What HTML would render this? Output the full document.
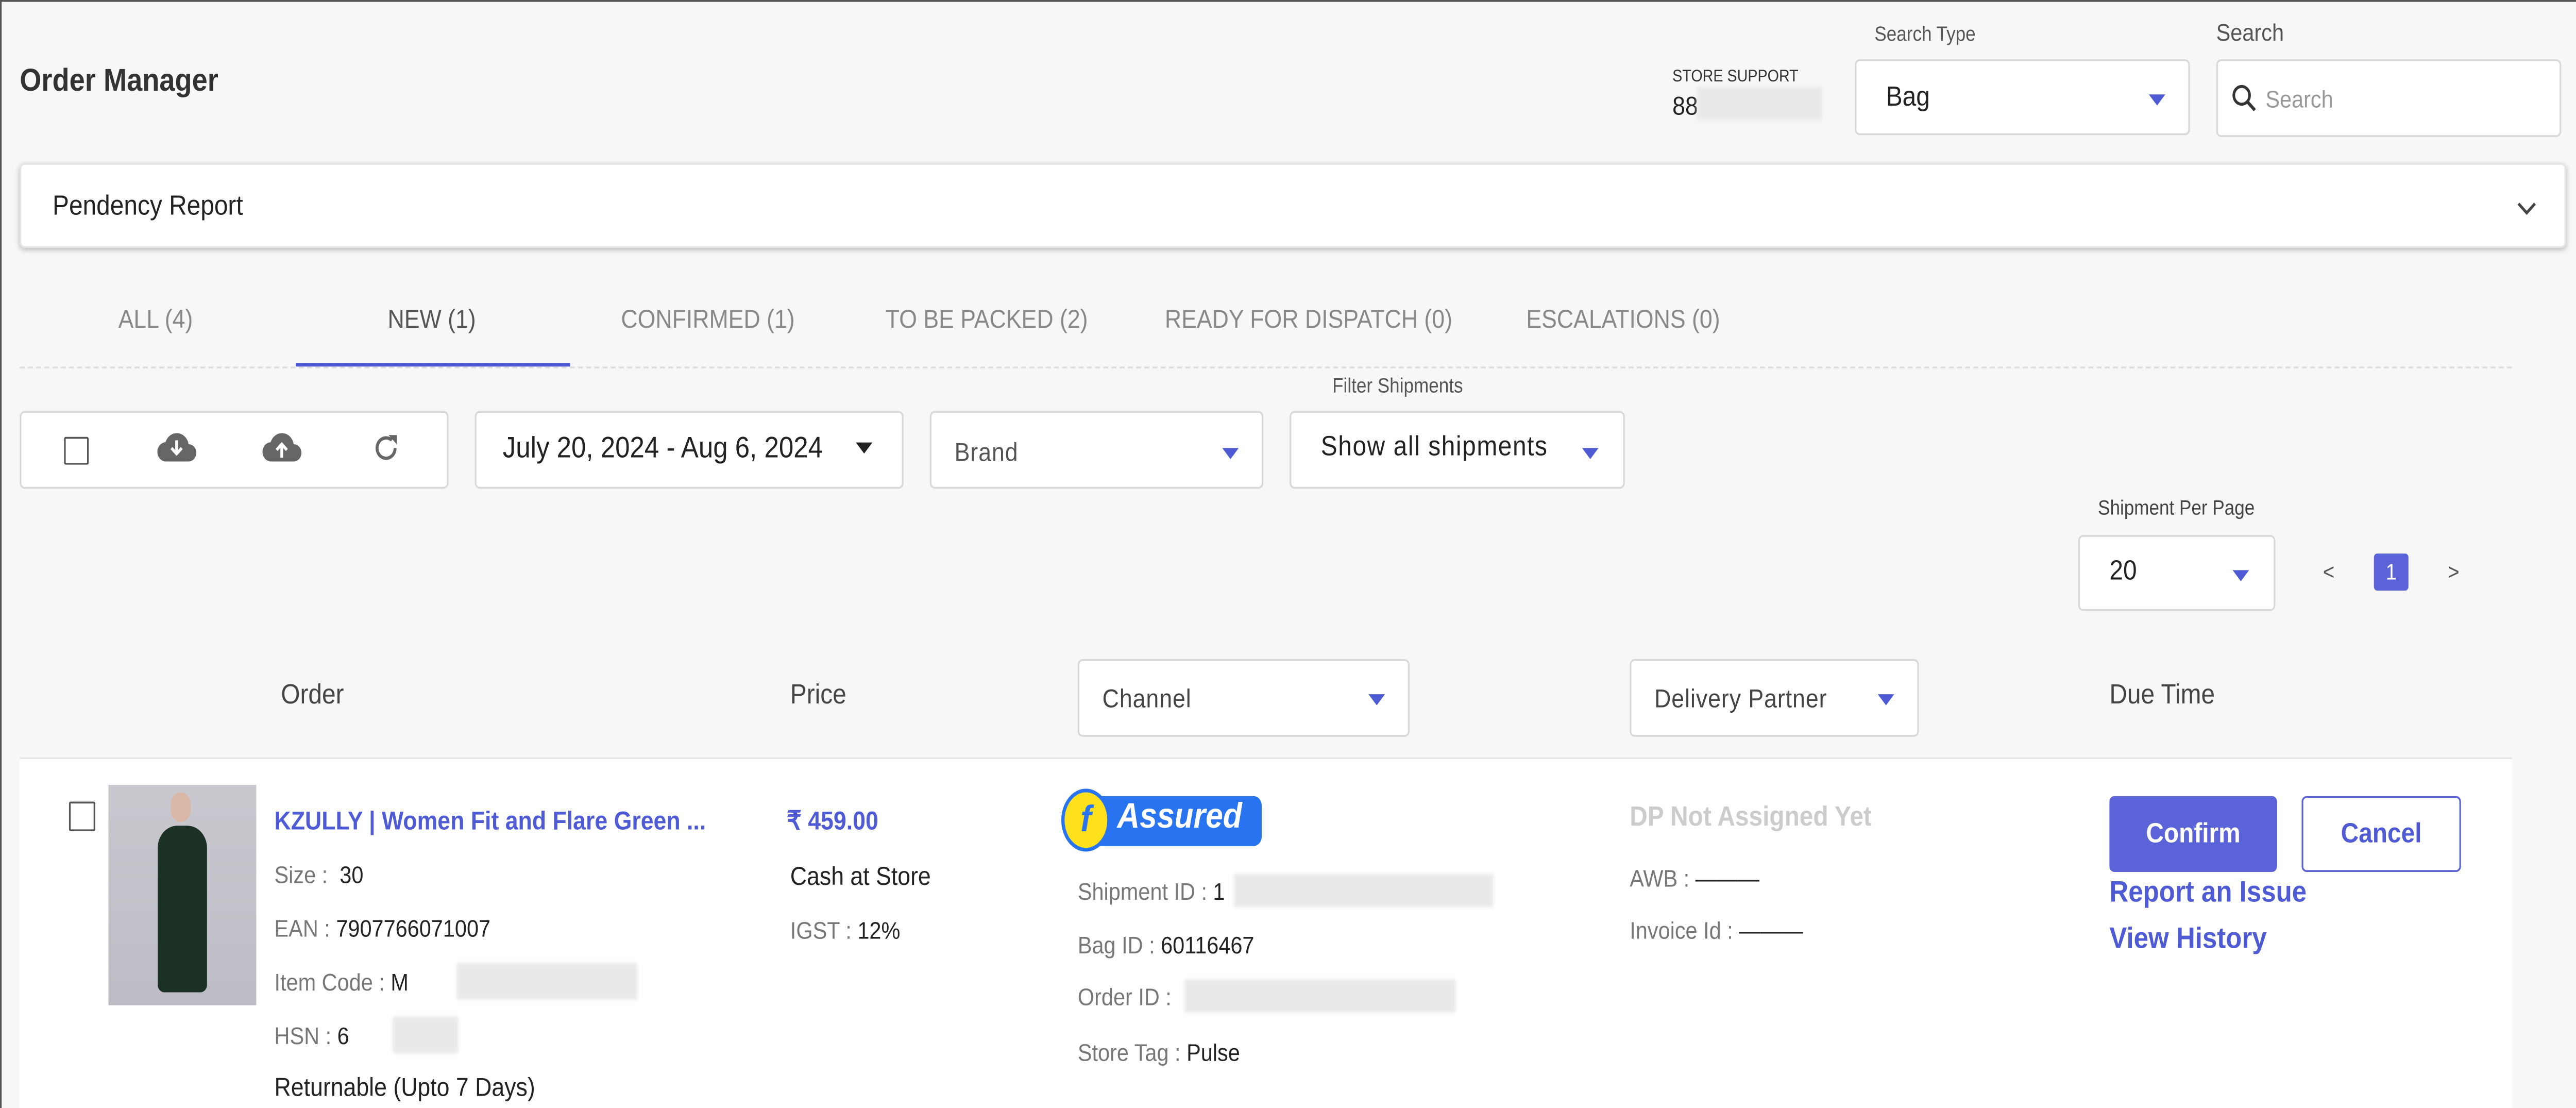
<!DOCTYPE html>
<html><head><meta charset="utf-8"><style>
html,body{margin:0;padding:0;width:100%;height:100%;overflow:hidden;background:#f7f7f7;}
#w{position:absolute;left:0;top:0;width:1568px;height:598.5px;overflow:hidden;transform:scale(3.5924);transform-origin:0 0;font-family:"Liberation Sans",sans-serif;color:#222;border-left:1px solid #555;border-top:1px solid #555;box-sizing:border-box;}
.a{position:absolute;white-space:nowrap;}
.box{position:absolute;background:#fff;border:1px solid #d8d8d8;border-radius:3px;box-sizing:border-box;}
.tri{position:absolute;width:0;height:0;border-left:5px solid transparent;border-right:5px solid transparent;border-top:6px solid #4f5bd5;}
.g{color:#777}.blur{position:absolute;background:#e9e9e9;filter:blur(1px);}
.tab{position:absolute;top:163px;font-size:14px;color:#888;}
</style></head><body><div id="w">
<div class="a" style="left:11px;top:33px;font-size:17px;font-weight:bold;color:#333">Order Manager</div>
<div class="a" style="left:1017px;top:35px;font-size:9px;color:#333">STORE SUPPORT</div>
<div class="a" style="left:1017px;top:48px;font-size:14px;color:#222">88</div>
<div class="blur" style="left:1032px;top:46px;width:76px;height:18px"></div>
<div class="a" style="left:1140px;top:12px;font-size:11px;color:#555">Search Type</div>
<div class="box" style="left:1128px;top:31px;width:204px;height:41px"></div>
<div class="a" style="left:1147px;top:43px;font-size:15px">Bag</div>
<div class="tri" style="left:1307px;top:50px"></div>
<div class="a" style="left:1348px;top:9px;font-size:13px;color:#555">Search</div>
<div class="box" style="left:1348px;top:31px;width:210px;height:42px"></div>
<svg class="a" style="left:1357px;top:44px" width="16" height="16" viewBox="0 0 16 16"><circle cx="6.5" cy="6.5" r="4.8" fill="none" stroke="#333" stroke-width="1.6"/><path d="M10 10l4.5 4.5" stroke="#333" stroke-width="1.8"/></svg>
<div class="a" style="left:1378px;top:45px;font-size:13px;color:#999">Search</div>
<div class="box" style="left:11px;top:87px;width:1550px;height:46px;box-shadow:0 1px 3px rgba(0,0,0,.25);border-color:#e5e5e5"></div>
<div class="a" style="left:31px;top:102px;font-size:15px">Pendency Report</div>
<svg class="a" style="left:1531px;top:108px" width="12" height="8"><path d="M1 1l5 5 5-5" fill="none" stroke="#444" stroke-width="1.6"/></svg>
<div class="tab" style="left:71px">ALL (4)</div>
<div class="tab" style="left:235px;color:#555">NEW (1)</div>
<div class="tab" style="left:377px">CONFIRMED (1)</div>
<div class="tab" style="left:538px">TO BE PACKED (2)</div>
<div class="tab" style="left:708px">READY FOR DISPATCH (0)</div>
<div class="tab" style="left:928px">ESCALATIONS (0)</div>
<div class="a" style="left:11px;top:197px;width:1517px;border-top:1px dashed #ddd"></div>
<div class="a" style="left:179px;top:195px;width:167px;height:2px;background:#4f5bd5"></div>
<div class="box" style="left:11px;top:221px;width:261px;height:42px"></div>
<div class="a" style="left:38px;top:235px;width:13px;height:13px;border:1.5px solid #555;border-radius:1px"></div>
<svg class="a" style="left:94px;top:232px" width="25" height="18" viewBox="0 0 24 16"><path d="M19 6A7 7 0 0 0 5.5 5 5 5 0 0 0 6 15h13a4.5 4.5 0 0 0 0-9z" fill="#666"/><path d="M12 4v7M9 8l3 3 3-3" stroke="#fff" stroke-width="1.6" fill="none"/></svg>
<svg class="a" style="left:158px;top:232px" width="25" height="18" viewBox="0 0 24 16"><path d="M19 6A7 7 0 0 0 5.5 5 5 5 0 0 0 6 15h13a4.5 4.5 0 0 0 0-9z" fill="#666"/><path d="M12 13V6M9 9l3-3 3 3" stroke="#fff" stroke-width="1.6" fill="none"/></svg>
<svg class="a" style="left:225px;top:232px" width="18" height="18" viewBox="0 0 18 18"><path d="M14.5 9A5.5 5.5 0 1 1 12.5 4.8" fill="none" stroke="#666" stroke-width="1.8"/><path d="M10.5 2h5v5z" fill="#666"/></svg>
<div class="box" style="left:288px;top:221px;width:261px;height:42px"></div>
<div class="a" style="left:305px;top:233px;font-size:16px">July 20, 2024 - Aug 6, 2024</div>
<div class="tri" style="left:520px;top:238px;border-top-color:#222"></div>
<div class="box" style="left:565px;top:221px;width:203px;height:42px"></div>
<div class="a" style="left:580px;top:235px;font-size:14px;color:#555;letter-spacing:.3px">Brand</div>
<div class="tri" style="left:743px;top:241px"></div>
<div class="a" style="left:810px;top:202px;font-size:11px;color:#555">Filter Shipments</div>
<div class="box" style="left:784px;top:221px;width:204px;height:42px"></div>
<div class="a" style="left:803px;top:232px;font-size:15px;letter-spacing:.5px">Show all shipments</div>
<div class="tri" style="left:962px;top:241px"></div>
<div class="a" style="left:1276px;top:268px;font-size:11px;color:#444">Shipment Per Page</div>
<div class="box" style="left:1264px;top:288px;width:120px;height:41px"></div>
<div class="a" style="left:1283px;top:299px;font-size:15px">20</div>
<div class="tri" style="left:1358px;top:307px"></div>
<div class="a" style="left:1413px;top:301px;font-size:12px;color:#555">&lt;</div>
<div class="a" style="left:1444px;top:298px;width:21px;height:20px;background:#5b63d9;border-radius:2px;color:#fff;font-size:12px;text-align:center;line-height:20px">1</div>
<div class="a" style="left:1489px;top:301px;font-size:12px;color:#555">&gt;</div>
<div class="a" style="left:170px;top:366px;font-size:15px;color:#444">Order</div>
<div class="a" style="left:480px;top:366px;font-size:15px;color:#444">Price</div>
<div class="box" style="left:655px;top:355px;width:202px;height:42px"></div>
<div class="a" style="left:670px;top:368px;font-size:14px;color:#444;letter-spacing:.3px">Channel</div>
<div class="tri" style="left:832px;top:374px"></div>
<div class="box" style="left:991px;top:355px;width:176px;height:42px"></div>
<div class="a" style="left:1006px;top:368px;font-size:14px;color:#444;letter-spacing:.3px">Delivery Partner</div>
<div class="tri" style="left:1142px;top:374px"></div>
<div class="a" style="left:1283px;top:366px;font-size:15px;color:#444">Due Time</div>
<div class="a" style="left:11px;top:408px;width:1517px;height:191px;background:#fff;border-top:1px solid #e6e6e6"></div>
<div class="a" style="left:41px;top:432px;width:14px;height:14px;border:1.5px solid #555;border-radius:1px"></div>
<div class="a" style="left:65px;top:423px;width:90px;height:119px;background:linear-gradient(#c9c8cf,#bdbcc4)"></div>
<div class="a" style="left:95px;top:445px;width:30px;height:90px;background:#1b3126;border-radius:12px 12px 4px 4px"></div>
<div class="a" style="left:103px;top:427px;width:12px;height:16px;background:#d9b7a6;border-radius:6px"></div>
<div class="a" style="left:166px;top:434px;font-size:14px;font-weight:bold;color:#4f5bd5">KZULLY | Women Fit and Flare Green ...</div>
<div class="a g" style="left:166px;top:464px;font-size:13px">Size : &nbsp;<span style="color:#222">30</span></div>
<div class="a g" style="left:166px;top:493px;font-size:13px">EAN : <span style="color:#222">7907766071007</span></div>
<div class="a g" style="left:166px;top:522px;font-size:13px">Item Code : <span style="color:#222">M</span></div>
<div class="blur" style="left:277px;top:519px;width:110px;height:20px"></div>
<div class="a g" style="left:166px;top:551px;font-size:13px">HSN : <span style="color:#222">6</span></div>
<div class="blur" style="left:238px;top:548px;width:40px;height:20px"></div>
<div class="a" style="left:166px;top:578px;font-size:14px">Returnable (Upto 7 Days)</div>
<div class="a" style="left:478px;top:434px;font-size:14px;font-weight:bold;color:#4f5bd5">₹ 459.00</div>
<div class="a" style="left:480px;top:464px;font-size:14px">Cash at Store</div>
<div class="a g" style="left:480px;top:494px;font-size:13px">IGST : <span style="color:#222">12%</span></div>
<div class="a" style="left:660px;top:429px;width:107px;height:27px;background:#2874f0;border-radius:5px"></div>
<div class="a" style="left:645px;top:425px;width:30px;height:34px;background:#ffe11b;border:2px solid #2874f0;border-radius:50%;box-sizing:border-box;color:#2874f0;font-weight:bold;font-style:italic;font-size:20px;text-align:center;line-height:30px">f</div>
<div class="a" style="left:679px;top:430px;font-size:19px;font-weight:bold;font-style:italic;color:#fff">Assured</div>
<div class="a g" style="left:655px;top:473px;font-size:13px">Shipment ID : <span style="color:#222">1</span></div>
<div class="blur" style="left:750px;top:471px;width:158px;height:18px"></div>
<div class="a g" style="left:655px;top:502px;font-size:13px">Bag ID : <span style="color:#222">60116467</span></div>
<div class="a g" style="left:655px;top:530px;font-size:13px">Order ID :</div>
<div class="blur" style="left:720px;top:528px;width:165px;height:18px"></div>
<div class="a g" style="left:655px;top:560px;font-size:13px">Store Tag : <span style="color:#222">Pulse</span></div>
<div class="a" style="left:991px;top:432px;font-size:15px;font-weight:bold;color:#ccc">DP Not Assigned Yet</div>
<div class="a g" style="left:991px;top:466px;font-size:13px">AWB : <span style="color:#222">———</span></div>
<div class="a g" style="left:991px;top:494px;font-size:13px">Invoice Id : <span style="color:#222">———</span></div>
<div class="a" style="left:1283px;top:429px;width:102px;height:41px;background:#5b63d9;border-radius:3px;color:#fff;font-size:15px;font-weight:bold;text-align:center;line-height:41px">Confirm</div>
<div class="a" style="left:1400px;top:429px;width:97px;height:41px;border:1px solid #5b63d9;box-sizing:border-box;border-radius:3px;color:#4f5bd5;font-size:15px;font-weight:bold;text-align:center;line-height:39px;background:#fff">Cancel</div>
<div class="a" style="left:1283px;top:473px;font-size:16px;font-weight:bold;color:#4f5bd5">Report an Issue</div>
<div class="a" style="left:1283px;top:498px;font-size:16px;font-weight:bold;color:#4f5bd5">View History</div>
</div>
<script>
(function(){var w=document.getElementById('w');function f(){var vw=document.documentElement.clientWidth||window.innerWidth||5633;var vh=document.documentElement.clientHeight||window.innerHeight||2150;w.style.transform='scale('+(vw/1568)+','+(vh/598.5)+')';}f();window.addEventListener('resize',f);})();
</script>
</body></html>
